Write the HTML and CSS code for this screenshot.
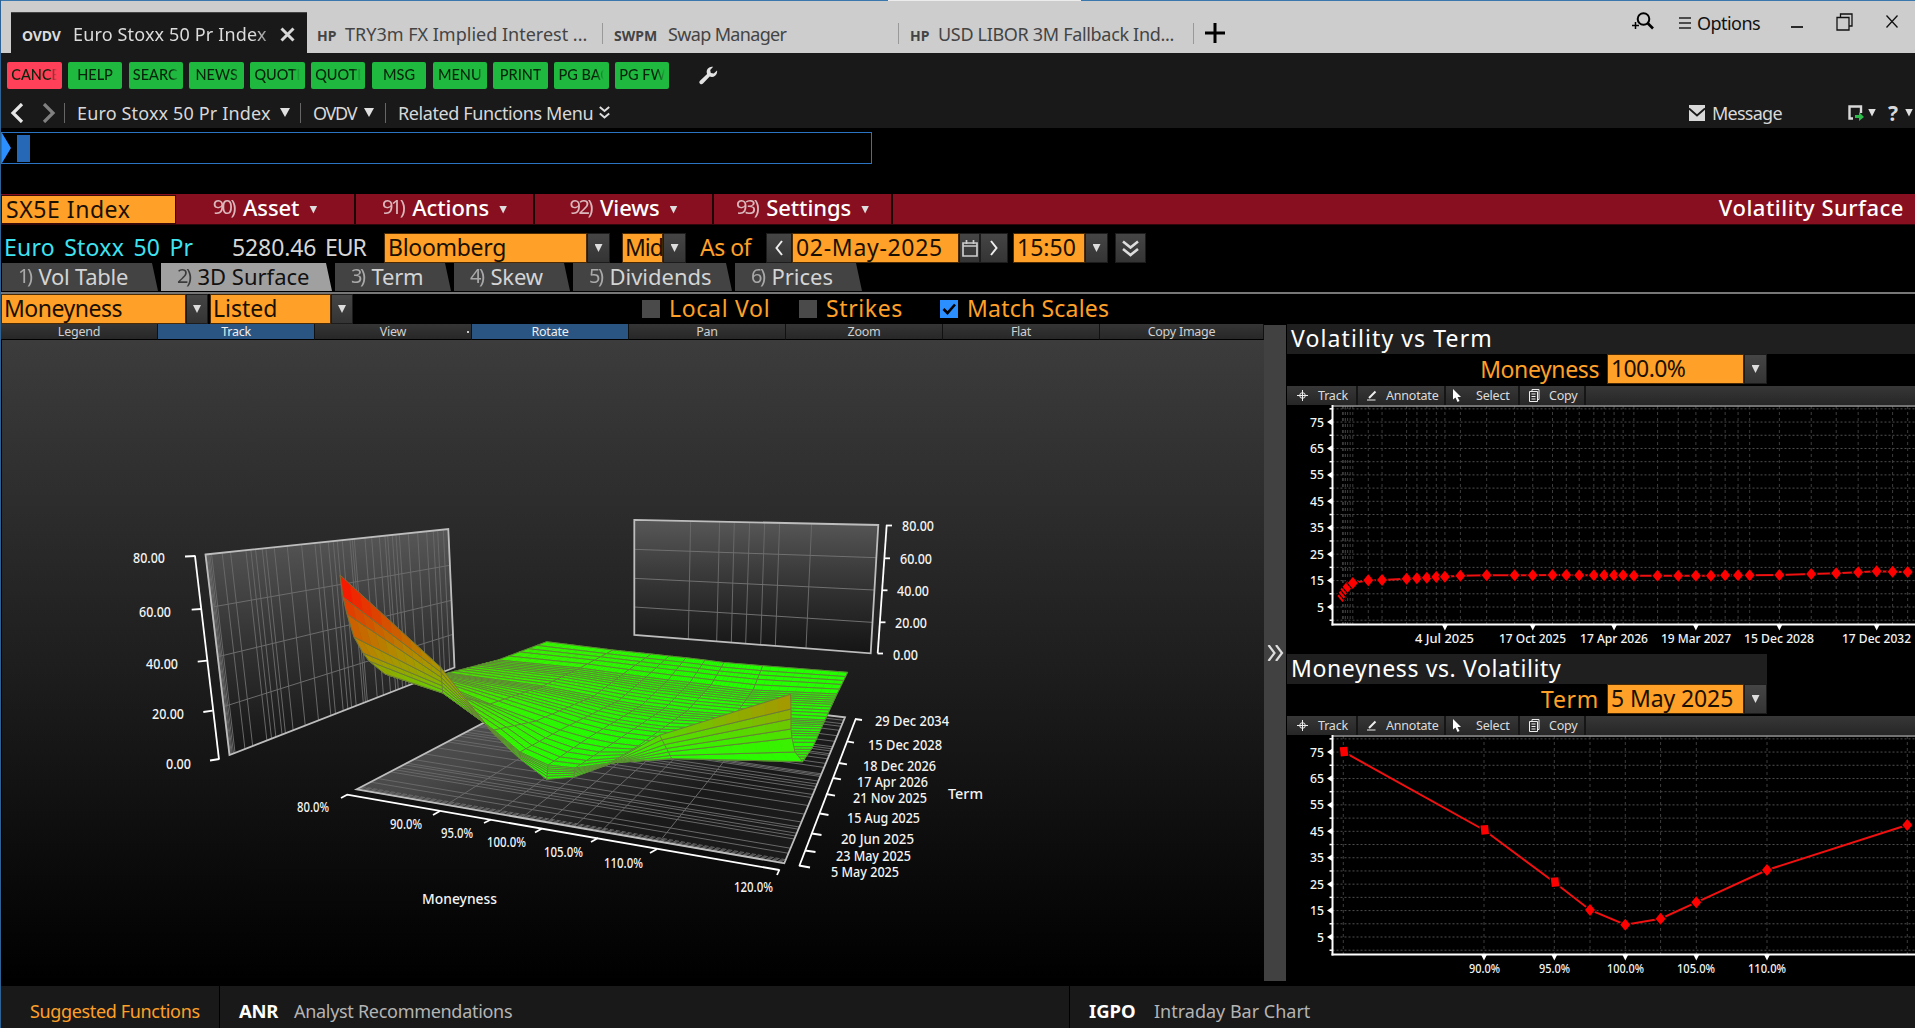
FILE: index.html
```html
<!DOCTYPE html>
<html lang="en">
<head>
<meta charset="utf-8">
<title>OVDV Euro Stoxx 50 Pr Index</title>
<link rel="stylesheet" href="styles.css">
</head>
<body>
<div class="window">
  <header class="titlebar">
    <div class="wtab active"><b>OVDV</b><span class="t1">Euro Stoxx 50 Pr Index</span>
      <svg class="close" width="15" height="15" viewBox="0 0 15 15"><path d="M1.5 1.5l12 12M13.500 1.500l-12 12" stroke="#d8d8d8" stroke-width="3" fill="none"/></svg></div>
    <div class="wtab w2"><b>HP</b><span class="t2">TRY3m FX Implied Interest ...</span></div>
    <div class="wtab w3"><b>SWPM</b><span class="t3">Swap Manager</span></div>
    <div class="wtab w4"><b>HP</b><span class="t4">USD LIBOR 3M Fallback Ind...</span></div>
    <svg class="plus" width="20" height="20" viewBox="0 0 20 20"><path d="M10 0v20M0 10h20" stroke="#000" stroke-width="3"/></svg>
    <div class="winctl">
      <svg width="22" height="19" viewBox="0 0 22 19" fill="none" stroke="#000"><circle cx="11.500" cy="7" r="5.800" stroke-width="2"/><path d="M15.500 11l5.500 5.500" stroke-width="2.600"/><path d="M0 13.500h7M3.500 10v7" stroke-width="1.500"/></svg>
      <svg class="burger" width="12" height="12" viewBox="0 0 12 12"><path d="M0 1h12M0 6h12M0 11h12" stroke="#222" stroke-width="1.300"/></svg>
      <span class="options">Options</span>
      <svg class="min" width="12" height="2"><path d="M0 1h12" stroke="#000" stroke-width="1.600"/></svg>
      <svg class="max" width="17" height="18" viewBox="0 0 17 18" fill="none" stroke="#111" stroke-width="1.300"><path d="M1 4.500h12v12.500H1zM4.500 4.500V1H16v12h-3"/></svg>
      <svg class="cls" width="12" height="13" viewBox="0 0 12 13"><path d="M.5.5l11 12M11.500.5l-11 12" stroke="#111" stroke-width="1.300"/></svg>
    </div>
  </header>

  <div class="keys">
    <button class="red"><span>CANCEL</span></button><button><span>HELP</span></button><button><span>SEARCH</span></button><button><span>NEWS</span></button><button><span>QUOTE</span></button><button><span>QUOTE</span></button><button><span>MSG</span></button><button><span>MENU</span></button><button><span>PRINT</span></button><button><span>PG BACK</span></button><button><span>PG FWD</span></button>
    <svg class="wrench" width="19" height="19" viewBox="0 0 19 19"><path d="M18 4.500a5.300 5.300 0 0 1-7.300 5.900L4 17.600a2 2 0 0 1-3-2.900L8.100 8A5.300 5.300 0 0 1 14.200.8L11.200 4l.6 3 3 .6z" fill="#e2e2e2"/></svg>
  </div>

  <nav class="nav">
    <svg class="back" width="14" height="20" viewBox="0 0 14 20"><path d="M12 1L3 10l9 9" fill="none" stroke="#e6e6e6" stroke-width="3.200"/></svg>
    <svg class="fwd" width="14" height="20" viewBox="0 0 14 20"><path d="M2 1l9 9-9 9" fill="none" stroke="#808080" stroke-width="3.200"/></svg>
    <span class="crumb c1">Euro Stoxx 50 Pr Index</span><i class="tri"></i>
    <span class="crumb c2">OVDV</span><i class="tri"></i>
    <span class="crumb c3">Related Functions Menu</span>
    <svg width="11" height="13" viewBox="0 0 11 13"><path d="M.8 1l4.700 4L10.200 1M.8 7.500l4.700 4 4.700-4" fill="none" stroke="#ddd" stroke-width="2"/></svg>
    <div class="navright">
      <svg width="16" height="16" viewBox="0 0 16 16"><path d="M0 0h16v16H0z" fill="#d8d8d8"/><path d="M0 3.500l8 7 8-7" fill="none" stroke="#191919" stroke-width="1.800"/></svg>
      <span class="message">Message</span>
      <svg class="export" width="17" height="16" viewBox="0 0 17 16"><path d="M5 13.500H1.500v-12h11.500V8" fill="none" stroke="#d8d8d8" stroke-width="2.400"/><path d="M7 10h4V7l5 5-5 4v-3H7z" fill="#2ebd4b"/></svg><i class="tri s"></i>
      <b class="help">?</b><i class="tri s"></i>
    </div>
  </nav>

  <div class="cmd"><div class="cmdbox"><i class="prompt"></i><i class="cursor"></i></div></div>

  <div class="redbar">
    <div class="ticker">SX5E Index</div>
    <div class="menu"><small>90)</small>Asset<i class="tri m"></i></div>
    <div class="menu"><small>91)</small>Actions<i class="tri m"></i></div>
    <div class="menu"><small>92)</small>Views<i class="tri m"></i></div>
    <div class="menu"><small>93)</small>Settings<i class="tri m"></i></div>
    <div class="title">Volatility Surface</div>
  </div>

  <div class="inforow">
    <span class="secname">Euro Stoxx 50 Pr</span><span class="px">5280.46</span><span class="ccy">EUR</span>
    <span class="field bloom">Bloomberg</span><span class="dd"><i class="tri m"></i></span>
    <span class="field mid">Mid</span><span class="dd"><i class="tri m"></i></span>
    <span class="asof">As of</span>
    <span class="btn prev"><svg width="8" height="16" viewBox="0 0 8 16"><path d="M7 1L1.500 8 7 15" fill="none" stroke="#eee" stroke-width="2"/></svg></span>
    <span class="field date">02-May-2025</span>
    <span class="btn cal"><svg width="16" height="17" viewBox="0 0 16 17"><path d="M1 3h14v13H1zM1 6h14M4.500 0v4M11.500 0v4" fill="none" stroke="#ccc" stroke-width="1.700"/></svg></span>
    <span class="btn next"><svg width="8" height="16" viewBox="0 0 8 16"><path d="M1 1l5.500 7L1 15" fill="none" stroke="#eee" stroke-width="2"/></svg></span>
    <span class="field time">15:50</span><span class="dd"><i class="tri m"></i></span>
    <span class="btn more"><svg width="17" height="17" viewBox="0 0 17 17"><path d="M1 1.500l7.500 6L16 1.500M1 9l7.500 6L16 9" fill="none" stroke="#ddd" stroke-width="2.600"/></svg></span>
  </div>

  <div class="tabs">
    <div class="tab a"><small>1)</small>Vol Table</div>
    <div class="tab b on"><small>2)</small>3D Surface</div>
    <div class="tab c"><small>3)</small>Term</div>
    <div class="tab d"><small>4)</small>Skew</div>
    <div class="tab e"><small>5)</small>Dividends</div>
    <div class="tab f"><small>6)</small>Prices</div>
  </div>

  <div class="optrow">
    <span class="field mny">Moneyness</span><span class="dd"><i class="tri m"></i></span>
    <span class="field lst">Listed</span><span class="dd"><i class="tri m"></i></span>
    <span class="chk k1"></span><span class="lbl l1">Local Vol</span>
    <span class="chk k2"></span><span class="lbl l2">Strikes</span>
    <span class="chk k3"><svg width="18" height="18" viewBox="0 0 18 18"><path d="M3.500 9l4 4L15 4.500" fill="none" stroke="#000" stroke-width="2.600"/></svg></span><span class="lbl l3">Match Scales</span>
  </div>

  <main class="main">
    <section class="surface">
      <div class="stools"><span>Legend</span><span class="on">Track</span><span class="dot">View</span><span class="on">Rotate</span><span>Pan</span><span>Zoom</span><span>Flat</span><span>Copy Image</span></div>
      <svg id="surface" width="1262" height="642" viewBox="2 340 1262 642"></svg>
    </section>
    <div class="splitter"><svg width="17" height="16" viewBox="0 0 17 16"><path d="M1.500 0l6 8-6 8M9 0l6 8-6 8" fill="none" stroke="#ddd" stroke-width="2.200"/></svg></div>
    <section class="side">
      <article>
        <h2 class="h-term">Volatility vs Term</h2>
        <div class="pick"><label class="p1">Moneyness</label><span class="field">100.0%</span><span class="dd"><i class="tri m"></i></span></div>
        <div class="ctools"></div>
        <svg id="term" width="628" height="249" viewBox="1287 405 628 249"></svg>
      </article>
      <article>
        <h2 class="h-mny">Moneyness vs. Volatility</h2>
        <div class="pick"><label class="p2">Term</label><span class="field f2">5 May 2025</span><span class="dd"><i class="tri m"></i></span></div>
        <div class="ctools"></div>
        <svg id="skew" width="628" height="250" viewBox="1287 405 628 250"></svg>
      </article>
    </section>
  </main>

  <footer class="footer">
    <div class="f1">Suggested Functions</div>
    <div class="f2c"><b>ANR</b><span>Analyst Recommendations</span></div>
    <div class="f3"><b>IGPO</b><span>Intraday Bar Chart</span></div>
  </footer>
</div>
<script src="charts.js"></script>
</body>
</html>
```
FILE: styles.css
```css
* { box-sizing: border-box; }
body { margin: 0; background: #000; font-family: "Noto Sans", "Open Sans", sans-serif; overflow: hidden; }
.window { width: 1915px; height: 1028px; display: flex; flex-direction: column; border-left: 1px solid #2d6294; background: #000; white-space: nowrap; }
svg { display: block; flex: none; }
.tri { flex: none; display: block; width: 10px; height: 9px; background: #e0e0e0; clip-path: polygon(0 0, 100% 0, 50% 100%); }
.tri.m { width: 8px; height: 8px; background: #ddd; }
.tri.s { width: 8px; height: 8px; }

/* window title bar */
.titlebar { height: 53px; flex: none; background: linear-gradient(90deg, #3a77ad 887px, #ececec 887px, #ececec 1080px, #3a77ad 1080px) 0 0 / 100% 1px no-repeat #cdcdcd; display: flex; padding-left: 10px; }
.wtab { position: relative; display: flex; align-items: baseline; margin-top: 12px; height: 41px; padding-top: 9px; color: #444; font-size: 18px; line-height: 26px; }
.wtab b { font-size: 14px; }
.wtab.active { background: #191919; width: 296px; padding-left: 11px; color: #dcdcdc; border-top: 1px solid #444; padding-top: 8px; }
.wtab.active b { width: 51px; letter-spacing: -.1px; }
.active .close { align-self: flex-start; margin: 6px 12px 0 auto; }
.t1 { letter-spacing: .15px; width: 196px; overflow: hidden; -webkit-mask: linear-gradient(90deg, #000 92%, #0008); }
.w2 { width: 297px; padding-left: 10px; }
.w2 b, .w4 b { width: 28px; }
.w3 { width: 296px; padding-left: 10px; }
.w3 b { width: 54px; }
.w4 { width: 295px; padding-left: 10px; }
.w2::after, .w3::after, .w4::after { content: ""; position: absolute; right: 1px; top: 11px; height: 21px; width: 1px; background: #999; }
.t3 { letter-spacing: -.65px; }
.t4 { letter-spacing: -.32px; }
.plus { margin: 23px 0 0 10px; }
.winctl { display: flex; margin-left: auto; width: 283px; padding-top: 12px; align-items: flex-start; }
.burger { margin: 5px 0 0 25px; }
.options { font-size: 18px; line-height: 22px; margin: 0 0 0 6px; width: 94px; letter-spacing: -.55px; color: #111; }
.min { margin-top: 14px; }
.max { margin: 1px 0 0 33px; }
.cls { margin: 3px 0 0 33px; }

/* function keys */
.keys { height: 44px; flex: none; background: #191919; display: flex; padding: 9px 0 0 6px; gap: 6.3px; }
.keys button { width: 54.5px; height: 27px; border: 0; border-radius: 2px; background: #1fb93f; padding: 0 4px; display: flex; justify-content: center; overflow: hidden; }
.keys button span { font: 500 14.500px/26px Lato, sans-serif; color: #08240c; max-width: 46px; overflow: hidden; -webkit-mask: linear-gradient(90deg, #000 38px, transparent 46px); }
.keys button.red { background: #ff4058; }
.keys .wrench { margin: 4px 0 0 23px; }

/* breadcrumb row */
.nav { height: 31px; flex: none; background: #191919; display: flex; align-items: center; padding: 0 0 0 9px; color: #d8d8d8; }
.nav .fwd { margin-left: 18px; margin-right: 7px; }
.crumb { font-size: 18px; line-height: 26px; border-left: 1px solid #666; height: 20px; display: flex; align-items: center; padding-left: 12px; }
.c1 { width: 216px; margin-left: 1px; letter-spacing: .15px; }
.c2 { width: 64px; margin-left: 10px; letter-spacing: -1.300px; }
.c3 { width: 214px; margin-left: 11px; letter-spacing: -.4px; }
.navright { margin-left: auto; width: 226px; display: flex; align-items: center; }
.message { font-size: 18px; letter-spacing: -.75px; margin-left: 7px; width: 138px; line-height: 24px; }
.export { margin-right: 3px; margin-left: -2px; }
.help { font-size: 21px; line-height: 24px; margin-left: 12px; width: 17px; }

/* command line */
.cmd { height: 66px; flex: none; padding: 4px 0 0; }
.cmdbox { width: 871px; height: 32px; border: 1px solid #2b74c4; display: flex; align-items: center; }
.prompt { width: 9px; height: 30px; background: #2b8fff; clip-path: polygon(0 0, 100% 50%, 0 100%); }
.cursor { width: 13px; height: 27px; margin-left: 6px; background: #2668b6; }

/* red menu bar */
.redbar { height: 31px; flex: none; display: flex; background: #870f1f; border-bottom: 1px solid #2e060b; }
.ticker { width: 175px; height: 29px; margin-top: 1px; background: #ffa028; border: 1px solid #3a0a0a; font-size: 23px; line-height: 26px; color: #1a1000; padding-left: 4px; letter-spacing: .55px; }
.menu { width: 179px; border-right: 2px solid #1c0306; display: flex; align-items: center; justify-content: center; font-size: 22px; font-weight: 500; color: #fff; line-height: 26px; padding-bottom: 4px; letter-spacing: -.1px; }
.menu:nth-child(2) { width: 180px; }
.menu small, .tab small { font-size: 20px; font-weight: 400; letter-spacing: -2.500px; margin-right: 9px; opacity: .7; }
.menu .tri { margin: 5px 0 0 10px; }
.title { margin-left: auto; margin-right: 11px; font-size: 22px; font-weight: 500; line-height: 27px; color: #fff; letter-spacing: .5px; }

/* security and pricing row */
.inforow { height: 38px; flex: none; display: flex; align-items: flex-start; padding-top: 9px; font-size: 23px; line-height: 26px; color: #d6d6d6; }
.secname { color: #3fe3f0; width: 227px; padding-left: 3px; word-spacing: 3px; letter-spacing: .25px; }
.px { width: 93px; padding-left: 4px; letter-spacing: -.1px; }
.ccy { width: 64px; padding-left: 4px; letter-spacing: -1px; }
.field { display: block; height: 28px; background: #ffa028; color: #1a1000; line-height: 26px; font-size: 23px; padding-left: 3px; box-shadow: 0 0 0 1px #4a2b05; }
.dd, .btn { height: 28px; background: linear-gradient(#454545, #343434); display: flex; align-items: center; justify-content: center; width: 21px; margin-left: 2px; box-shadow: 0 0 0 1px #1c1c1c; }
.bloom { width: 201px; letter-spacing: -.3px; }
.mid { margin-left: 14px; width: 39px; letter-spacing: -1px; padding-left: 2px; }
.asof { color: #ffa028; margin-left: 15px; width: 67px; letter-spacing: -.5px; }
.prev { width: 24px; margin-left: 0; }
.date { width: 165px; margin-left: 2px; letter-spacing: .7px; }
.cal { width: 19px; margin-left: 2px; }
.next { width: 26px; margin-left: 2px; }
.time { width: 70px; margin-left: 7px; }
.more { width: 29px; margin-left: 9px; }

/* tab strip */
.tabs { height: 31px; flex: none; display: flex; border-bottom: 2px solid #777; gap: 3px; padding-left: 1px; }
.tab { height: 28px; background: #434343; color: #d4d4d4; font-size: 22px; line-height: 26px; padding: 0 0 2px 16px; display: flex; align-items: center; clip-path: polygon(0 0, calc(100% - 6px) 0, 100% 100%, 0 100%); }
.tab small { margin-right: 8px; }
.tab.on { background: #a0a0a0; color: #111; }
.a { width: 156px; letter-spacing: -.25px; } .b { width: 171px; } .c { width: 116px; letter-spacing: -.2px; } .d { width: 116px; letter-spacing: -.2px; } .e { width: 159px; } .f { width: 127px; }

/* surface options */
.optrow { height: 30px; flex: none; display: flex; align-items: flex-start; padding: 1px 0 0 1px; }
.mny { width: 183px; letter-spacing: -.5px; padding-left: 2px; } .lst { width: 119px; margin-left: 4px; padding-left: 2px; }
.optrow .dd { width: 20px; }
.chk { width: 18px; height: 18px; background: #4a4a4a; margin-top: 5px; }
.k1 { margin-left: 290px; } .k2 { margin-left: 22px; } .k3 { margin-left: 30px; background: #2b8fff; }
.lbl { color: #ffa028; font-size: 23px; line-height: 26px; margin-left: 9px; }
.l1 { width: 108px; letter-spacing: .7px; } .l2 { width: 84px; letter-spacing: .6px; } .l3 { letter-spacing: .2px; }

/* main area */
.main { height: 662px; flex: none; display: flex; }
.surface { width: 1263px; padding-left: 1px; }
.stools { display: flex; height: 16px; font-size: 12.500px; line-height: 15px; color: #d0d0d0; text-align: center; letter-spacing: -.25px; margin-left: -1px; }
.stools span { position: relative; width: 157px; background: linear-gradient(#353535, #272727); border-right: 1px solid #111; border-bottom: 1px solid #000; }
.stools span:last-child { flex: 1; }
.stools .on { background: #2a5583; color: #eee; }
.stools .dot::after { content: ""; position: absolute; right: 2px; top: 7px; width: 2px; height: 2px; background: #ccc; }
#surface { background: linear-gradient(#3c3c3c, #000); }
#surface text, #term text, #skew text { fill: #f4f4f4; font-family: "Noto Sans", sans-serif; font-weight: 500; }
.splitter { width: 22px; height: 656px; margin: 1px 0 0; background: #414141; display: flex; align-items: center; justify-content: center; }
.side { width: 628px; margin-left: 1px; display: flex; flex-direction: column; }
.side h2 { margin: 0; height: 30px; background: #1f1f1f; font-size: 23px; line-height: 29px; font-weight: 400; color: #fff; padding-left: 4px; letter-spacing: 1.100px; }
.side .h-mny { width: 480px; letter-spacing: .62px; line-height: 28px; }
.pick { display: flex; height: 32px; padding-top: 1px; }
.pick label { color: #ffa028; font-size: 23px; line-height: 28px; width: 321px; text-align: right; padding-right: 9px; letter-spacing: -.4px; }
.pick label.p2 { letter-spacing: .7px; }
.pick .field { width: 135px; letter-spacing: -.6px; }
.pick .f2 { letter-spacing: -.1px; }
.ctools { height: 19px; display: flex; background: linear-gradient(#373737, #262626); font-size: 12.500px; line-height: 17px; color: #dcdcdc; }
.ctools > span { display: flex; align-items: center; border-right: 2px solid #151515; letter-spacing: -.2px; padding-bottom: 1px; }
.ctools span:nth-child(1) { width: 71px; padding-left: 10px; gap: 10px; }
.ctools span:nth-child(2) { width: 88px; padding-left: 9px; gap: 8px; }
.ctools span:nth-child(3) { width: 74px; padding-left: 7px; gap: 14px; }
.ctools span:nth-child(4) { width: 66px; padding-left: 9px; gap: 9px; }

/* footer */
.footer { flex: 1; background: #191919; display: flex; font-size: 18px; line-height: 24px; color: #b4b4b4; }
.footer > div { padding-top: 13px; border-right: 1px solid #000; display: flex; }
.footer b { color: #fff; font-size: 18.500px; }
.f1 { width: 219px; padding-left: 29px; color: #ffa028; letter-spacing: -.35px; }
.f2c { width: 850px; padding-left: 19px; letter-spacing: -.3px; }
.f2c b { width: 55px; }
.footer .f3 { border: 0; padding-left: 19px; }
.f3 b { width: 65px; }
```
FILE: charts.js
```js
const NS = 'http://www.w3.org/2000/svg';
function el(p, n, a, t) {
  const e = document.createElementNS(NS, n);
  for (const k in a) e.setAttribute(k, a[k]);
  if (t) e.textContent = t;
  p.appendChild(e);
  return e;
}
const mix = (a, b, t) => [a[0] + (b[0] - a[0]) * t, a[1] + (b[1] - a[1]) * t];
const pts = a => a.map(p => p[0].toFixed(1) + ',' + p[1].toFixed(1)).join(' ');
const label = (s, t, x0, x1, y, size) => el(s, 'text', { x: x0, y, 'font-size': size || 13.5, textLength: x1 - x0, lengthAdjust: 'spacingAndGlyphs' }, t);
const line = (s, a, b, stroke, w, extra) => el(s, 'line', Object.assign({ x1: a[0], y1: a[1], x2: b[0], y2: b[1], stroke, 'stroke-width': w }, extra || {}));

/* chart toolbars */
document.querySelectorAll('.ctools').forEach(t => {
  t.innerHTML =
    '<span><svg width="11" height="11" viewBox="0 0 11 11" fill="none" stroke="#eee"><path d="M5.500 0v11M0 5.500h11"/><circle cx="5.500" cy="5.500" r="2.800"/></svg>Track</span>' +
    '<span><svg width="11" height="11" viewBox="0 0 11 11" fill="none" stroke="#eee"><path d="M2 8L8.500 1.500" stroke-width="2"/><path d="M0 10h8.500"/></svg>Annotate</span>' +
    '<span><svg width="9" height="13" viewBox="0 0 9 13"><path d="M0 0v10.500l2.500-2 2 4.500 2-1-2-4H8z" fill="#fff"/></svg>Select</span>' +
    '<span><svg width="11" height="13" viewBox="0 0 11 13" fill="none" stroke="#eee"><path d="M3 2.500V.5h7v10H9M.5 2.500h8v10h-8zM2.500 5h4M2.500 7.500h4M2.500 10h4"/></svg>Copy</span>';
});

/* two-dimensional line charts */
function plot(id, verts, data, ticks, squares) {
  const s = document.getElementById(id), L = 1332.5, T = 406, B = 624.500;
  const y = v => 607 - (v - 5) * 2.642;
  for (let v = 0; v <= 80; v += 5) {
    line(s, [L, y(v)], [1915, y(v)], '#4e4e4e', 1, { 'stroke-dasharray': '2 2' });
    if (v % 10) {
      el(s, 'path', { d: `M${L} ${y(v) - 3.500}v7l-5.500 -3.500z`, fill: '#fff' });
      label(s, String(v), v < 10 ? 1317 : 1310, 1324, y(v) + 4.500, 12.500);
    } else line(s, [L - 3, y(v)], [L, y(v)], '#fff', 1.500);
  }
  verts.forEach(x => line(s, [x, T], [x, B], '#3d3d3d', 1, { 'stroke-dasharray': '3 3' }));
  line(s, [L, T], [1915, T], '#999', 1.500);
  line(s, [L, T - 1], [L, B + 1], '#fff', 2);
  line(s, [L - 1, B], [1915, B], '#fff', 2);
  ticks.forEach(([t, x, x0, x1]) => {
    el(s, 'path', { d: `M${x - 3} ${B}h6l-3 6z`, fill: '#fff' });
    label(s, t, x0, x1, 643, 13);
  });
  el(s, 'polyline', { points: pts(data), fill: 'none', stroke: '#f01010', 'stroke-width': 2 });
  data.forEach(([x, y], i) => {
    const d = i < squares
      ? `M${x - 3.500} ${y - 4.500}l7.500-.5 1 9-7.500.8z`
      : `M${x} ${y - 6}l5 6-5 6-5-6z`;
    el(s, 'path', { d, fill: '#f00', stroke: '#000', 'stroke-width': 2.400, 'paint-order': 'stroke' });
  });
}
const X = z => 1240 + z / 2.323;
const termZ = [[238, 858], [241, 848], [245, 838], [250, 830], [262, 819], [298, 811], [330, 810], [387, 806], [411, 805], [434, 803], [456, 801], [476, 800], [512, 797], [573, 796], [638, 796], [680, 796], [726, 795], [758, 795], [788, 796], [822, 796], [846, 796], [869, 796], [890, 796], [915, 797], [970, 797], [1018, 797], [1059, 797], [1094, 797], [1127, 796], [1157, 796], [1184, 796], [1253, 795], [1327, 792], [1385, 790], [1436, 787], [1479, 784], [1516, 785], [1551, 786]];
const term = termZ.map(p => [X(p[0]), 310 + p[1] / 3]);
plot('term', term.map(p => p[0]).concat([X(256)]), term,
  [['4 Jul 2025', X(476), 1415, 1474], ['17 Oct 2025', X(680), 1499, 1566], ['17 Apr 2026', X(869), 1580, 1648], ['19 Mar 2027', X(1059), 1661, 1731], ['15 Dec 2028', X(1253), 1744, 1814], ['17 Dec 2032', X(1479), 1842, 1911]], 0);
const skew = [[1343.300, 421.700], [1484, 500], [1554.300, 552.300], [1590, 580], [1625.300, 594.700], [1660.600, 588.700], [1696.300, 572.300], [1767, 540], [1907.300, 495]];
plot('skew', skew.map(p => p[0]), skew,
  [['90.0%', 1484, 1469, 1500], ['95.0%', 1554.300, 1539, 1570], ['100.0%', 1625.300, 1607, 1644], ['105.0%', 1696.300, 1677, 1715], ['110.0%', 1767, 1748, 1786]], 3);

/* three-dimensional surface */
const S = document.getElementById('surface');
const defs = el(S, 'defs', {});
const grad = (id, c) => {
  const g = el(defs, 'linearGradient', { id, x1: 0, y1: 0, x2: id === 'gf' ? .7 : 0, y2: id === 'gf' ? .6 : 1 });
  c.forEach((k, i) => el(g, 'stop', { offset: i / (c.length - 1), 'stop-color': k }));
};
grad('gw', ['#575757', '#333', '#141414']);
grad('gf', ['#5a5a5a', '#484848', '#1a1a1a']);
const terms = [257, 260, 263, 266, 270, 275, 307, 332, 378, 393, 407, 427, 438, 463, 502, 545, 585, 600, 625, 640, 652, 667, 690, 697, 703, 735, 755, 778, 795, 803, 817, 828, 838, 865, 893, 920, 940, 953, 970, 985].map(x => (x - 257) / 728);

/* left wall */
const LW = [[205.500, 554.500], [448.300, 529], [454.500, 667.500], [229.500, 755]];
el(S, 'polygon', { points: pts(LW), fill: 'url(#gw)' });
terms.forEach(u => line(S, mix(LW[0], LW[1], u), mix(LW[3], LW[2], u), '#686868', 1));
[[214, 606.700, 449.800, 565.300], [218, 656.700, 451.500, 600.300], [223.500, 706.700, 453, 634.300]].forEach(a => line(S, [a[0], a[1]], [a[2], a[3]], '#6c6c6c', 1));
el(S, 'polygon', { points: pts(LW), fill: 'none', stroke: '#bdbdbd', 'stroke-width': 1.800 });

/* right wall */
const RW = [[634.300, 519.800], [878.300, 525], [870.700, 653.300], [634.300, 635]];
el(S, 'polygon', { points: pts(RW), fill: 'url(#gw)' });
[[512, 505], [599, 590], [643, 634], [689, 677], [734, 722], [779, 766], [875, 858]].forEach(([a, b]) => {
  line(S, mix(RW[0], RW[1], (a - 343) / 732), mix(RW[3], RW[2], (b - 343) / 709), '#686868', 1);
});
[[148, 876, 173], [235, 874, 270], [321, 872, 367]].forEach(a => line(S, [634.300, 500 + a[0] / 3], [a[1], 500 + a[2] / 3], '#707070', 1));
el(S, 'polygon', { points: pts(RW), fill: 'none', stroke: '#bdbdbd', 'stroke-width': 1.800 });

/* floor */
const FL = [[356.700, 789.300], [784.300, 863.300], [845, 717.300], [558, 684]];
el(S, 'polygon', { points: pts(FL), fill: 'url(#gf)' });
terms.forEach((u, i) => line(S, mix(FL[0], FL[3], u), mix(FL[1], FL[2], u), '#686868', 1, i < 6 ? { 'stroke-dasharray': '4 2' } : {}));
[[.21, .231], [.326, .35], [.386, .41], [.446, .473], [.508, .534], [.571, .596], [.708, .727]].forEach(([a, b]) =>
  line(S, mix(FL[0], FL[1], a), mix(FL[3], FL[2], b), '#686868', 1));
el(S, 'polygon', { points: pts(FL), fill: 'none', stroke: '#bdbdbd', 'stroke-width': 1.800 });

/* volatility mesh: rows of projected points with their volatility */
function colour(v) {
  const k = [[15, [36, 255, 0]], [22, [52, 245, 0]], [30, [90, 215, 0]], [38, [140, 175, 0]], [48, [178, 140, 0]], [62, [220, 70, 0]], [74, [255, 12, 0]]];
  if (v <= 15) return 'rgb(36,255,0)';
  for (let i = 1; i < k.length; i++) if (v <= k[i][0]) {
    const t = (v - k[i - 1][0]) / (k[i][0] - k[i - 1][0]);
    return 'rgb(' + k[i][1].map((c, j) => Math.round(k[i - 1][1][j] + (c - k[i - 1][1][j]) * t)) + ')';
  }
  return 'rgb(255,12,0)';
}
const back = [[546.700, 641.700, 22], [613, 650, 19], [651, 654, 17], [669, 656, 16], [686, 657.700, 15], [705, 660, 15], [724, 662.500, 15], [762.700, 665.700, 15], [847.700, 672.300, 14]];
const b2 = [[498, 660, 24], [580, 668, 20], [623, 674, 18], [646, 677, 17], [668, 680, 16], [690, 682.500, 15], [711, 685, 15], [753, 690, 15], [837, 694, 14]];
const midr = [[448, 673, 27], [543, 686, 22], [594, 696, 18], [618, 701, 17], [642, 705, 16], [665, 708, 15], [687, 711, 15], [735, 715, 15], [825, 720, 14]];
const near = [[432, 680, 30], [490, 704, 24], [536, 721, 19], [560, 730, 17], [588, 738, 15], [613, 743, 15], [638, 746, 15], [700, 747, 15], [813, 746.700, 15]];
const low = [[385, 674, 38], [442.700, 693, 30], [494, 730, 24], [520, 752, 19], [548, 765, 15], [575, 768, 15], [610, 763, 15], [671.700, 758.500, 16], [802.700, 761.700, 17]];
const front = [[340, 575, 76], [440.700, 667.300, 47], [492.700, 733, 28], [520, 759, 18], [546.700, 779.300, 13], [574, 777, 13], [607, 765, 18], [659.700, 735.300, 31], [790.700, 694.300, 48]];
const SLICES = 10;
function band(A, B, steps) {
  mesh(steps.map(t => A.map((a, c) => a.map((v, j) => v + (B[c][j] - v) * t))));
}
function mesh(rows) {
  for (let r = 0; r < rows.length - 1; r++) {
    for (let c = 0; c < 8; c++) {
      for (let k = 0; k < SLICES; k++) {
        const f = (row, t) => row[c].map((v, j) => v + (row[c + 1][j] - v) * t);
        const p = f(rows[r], k / SLICES), q = f(rows[r], (k + 1) / SLICES), u = f(rows[r + 1], (k + 1) / SLICES), w = f(rows[r + 1], k / SLICES);
        const col = colour((p[2] + q[2] + u[2] + w[2]) / 4);
        el(S, 'polygon', { points: pts([p, q, u, w]), fill: col, stroke: col, 'stroke-width': .6 });
      }
    }
    const g = { fill: 'none', stroke: '#66773f', 'stroke-width': .9 };
    el(S, 'polyline', Object.assign({ points: pts(rows[r]) }, g));
    el(S, 'polyline', Object.assign({ points: pts(rows[r + 1]) }, g));
    rows[r].forEach((p, c) => line(S, p, rows[r + 1][c], '#66773f', .9));
  }
}
band(back, b2, [0, .2, .38, .56, .78, 1]);
band(b2, midr, [0, .08, .16, .24, .32, .4, .5, .62, .74, .87, 1]);
band(midr, near, [0, .06, .12, .18, .25, .34, .44, .52, .6, .72, .84, 1]);
band(near, low, [0, .18, .36, .52, .7, .85, 1]);

/* steep short-dated strip */
const left = [[385, 674], [369, 661], [363, 653], [354, 637], [347, 614], [343, 597], [340, 575]];
const right = [[802.700, 761.700], [795, 752], [792, 738], [791, 729], [791, 719], [791, 709], [790.700, 694.300]];
const lift = [0, .13, .28, .43, .6, .8, 1];
mesh(lift.map((t, i) => low.map((a, c) => {
  const p = a.map((v, j) => v + (front[c][j] - v) * t);
  if (c === 0) { p[0] = left[i][0]; p[1] = left[i][1]; }
  if (c === 8) { p[0] = right[i][0]; p[1] = right[i][1]; }
  return p;
})));

/* axes */
const axis = (a, b, ticks) => {
  line(S, a, b, '#fff', 1.800);
  ticks.forEach(t => line(S, [t[0], t[1]], [t[2], t[3]], '#fff', 1.800));
};
axis([195, 556], [219, 759.300], [[185, 556.500, 195.500, 556], [191.700, 609.700, 201, 609], [197.700, 661.700, 207, 660.700], [203.300, 712, 212.700, 710.700], [210, 760.500, 219.300, 759]]);
axis([886.700, 525], [877.700, 653.300], [[886, 525.500, 892, 525.500], [884, 558.300, 890, 558.300], [882, 590.300, 887.500, 590.300], [880, 622.300, 885.500, 622.300], [877.500, 653.500, 883, 653.500]]);
axis([347, 794.700], [779.300, 870], [[341, 798, 347.500, 794.500], [433, 815, 440, 811], [484, 823, 491, 819.500], [535, 832.500, 542, 828.500], [591, 842, 598, 838], [650, 853, 657, 849], [777, 875, 779.500, 869.500]]);
axis([855.700, 719], [799.300, 866], [[855, 719, 862, 720], [847, 741.300, 854, 742.700], [839, 763, 847, 764.300], [833, 778, 841, 779.300], [826, 794, 835, 795.700], [820, 813.500, 828.500, 815], [812, 833.500, 821.500, 835], [805, 850.500, 815.500, 852], [799, 865.500, 810, 867.500]]);
[['80.00', 133, 165, 562.700], ['60.00', 139, 171, 616.700], ['40.00', 146, 178, 668.700], ['20.00', 152, 184, 718.700], ['0.00', 166, 191, 768.700],
 ['80.0%', 297, 329, 811.700], ['90.0%', 390, 422, 829], ['95.0%', 441, 473, 838], ['100.0%', 487, 526, 847], ['105.0%', 544, 583, 857], ['110.0%', 604, 643, 868], ['120.0%', 734, 773, 892],
 ['80.00', 902, 934, 531], ['60.00', 900, 932, 564], ['40.00', 897, 929, 596], ['20.00', 895, 927, 628], ['0.00', 893, 918, 660],
 ['29 Dec 2034', 875, 949, 726], ['15 Dec 2028', 868, 942, 750], ['18 Dec 2026', 863, 936, 771], ['17 Apr 2026', 857, 928, 787], ['21 Nov 2025', 853, 927, 803], ['15 Aug 2025', 847, 920, 823], ['20 Jun 2025', 841, 914, 844], ['23 May 2025', 836, 911, 861], ['5 May 2025', 831, 899, 877]
].forEach(a => label(S, ...a));
label(S, 'Term', 948, 983, 799, 15);
label(S, 'Moneyness', 422, 497, 904, 15);
```
